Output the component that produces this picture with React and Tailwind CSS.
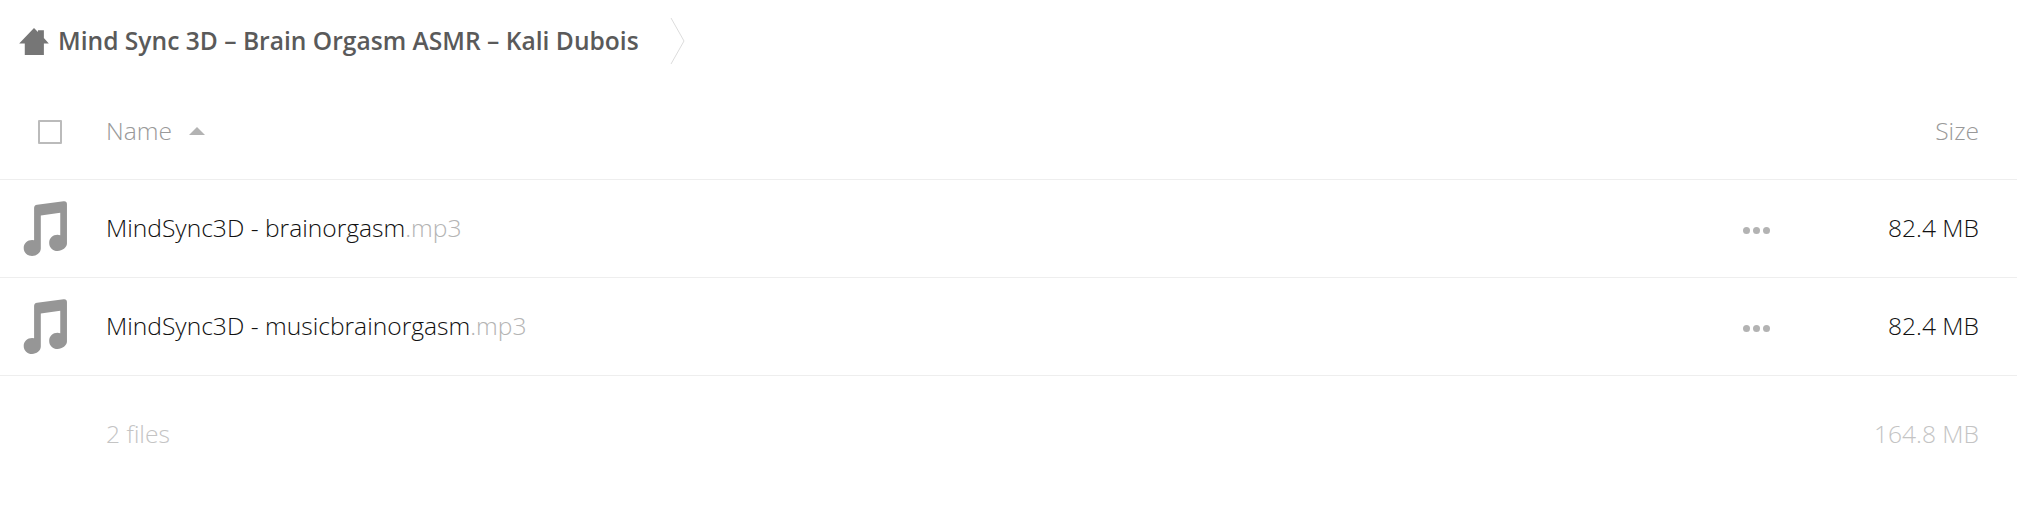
import React from 'react';

const files = [
  { base: 'MindSync3D - brainorgasm', ext: '.mp3', size: '82.4 MB' },
  { base: 'MindSync3D - musicbrainorgasm', ext: '.mp3', size: '82.4 MB' },
];

function HomeIcon() {
  return (
    <svg viewBox="28 48 90 82" className="w-[30px] h-[27px] shrink-0" fill="#767676">
      <path d="M73 48 L85 60 V55 H103 V78 L118 95 H103 V130 H45 V95 H28 Z" />
    </svg>
  );
}

function MusicIcon() {
  return (
    <svg viewBox="36 30 140 170" className="w-[47px] h-[57px]" fill="#969696">
      <path d="M72 54 Q72 45 81 44 L160 34 Q170 33 170 43 V160 C170 172 156 182 142 182 C128 182 117 172 117 158 C117 144 128 134 142 134 Q147 134 150 135 V68 L92 76 V175 C92 188 79 197 66 197 C52 197 41 187 41 173 C41 159 52 149 66 149 Q70 149 72 150 Z" />
    </svg>
  );
}

function Dots() {
  return (
    <div className="flex gap-[3px]">
      <span className="size-[7px] rounded-full bg-[#b3b3b3]" />
      <span className="size-[7px] rounded-full bg-[#b3b3b3]" />
      <span className="size-[7px] rounded-full bg-[#b3b3b3]" />
    </div>
  );
}

export default function App() {
  return (
    <div className="min-h-[509px] bg-white font-['Open_Sans','Noto_Sans',sans-serif] font-light text-[24.6px]">
      {/* breadcrumb */}
      <div className="h-[82px] flex items-center pl-[19px]">
        <HomeIcon />
        <span className="ml-[9px] text-[24.6px] font-semibold text-[#5a5a5a]">
          Mind Sync 3D – Brain Orgasm ASMR – Kali Dubois
        </span>
        <svg viewBox="0 0 15 46" className="ml-[31px] w-[15px] h-[46px]" fill="none" stroke="#dcdcdc" strokeWidth="1">
          <path d="M1 0 L14 23 L1 46" />
        </svg>
      </div>

      {/* header */}
      <div className="h-[98px] flex items-center border-b border-[#eeeeee] text-[#999]">
        <div className="w-[106px] pl-[38px] shrink-0 pt-[2px]">
          <div className="size-[24px] border-2 border-[#bbb] rounded-[1px]" />
        </div>
        <span className="pt-[1px]">Name</span>
        <span className="ml-[17px] mt-[1px] w-0 h-0 border-x-[8px] border-x-transparent border-b-[8px] border-b-[#b3b3b3]" />
        <span className="ml-auto pr-[38px] pt-[1px]">Size</span>
      </div>

      {/* rows */}
      {files.map((f) => (
        <div key={f.base} className="h-[98px] flex items-center border-b border-[#eeeeee] text-[#111]">
          <div className="w-[106px] pl-[22px] shrink-0">
            <MusicIcon />
          </div>
          <span>
            {f.base}
            <span className="text-[#b4b4b4]">{f.ext}</span>
          </span>
          <div className="ml-auto mt-[3px]">
            <Dots />
          </div>
          <div className="w-[247px] text-right pr-[38px]">{f.size}</div>
        </div>
      ))}

      {/* summary */}
      <div className="h-[116px] flex items-center text-[#c4c4c4]">
        <span className="pl-[106px]">2 files</span>
        <span className="ml-auto pr-[38px]">164.8 MB</span>
      </div>
    </div>
  );
}
